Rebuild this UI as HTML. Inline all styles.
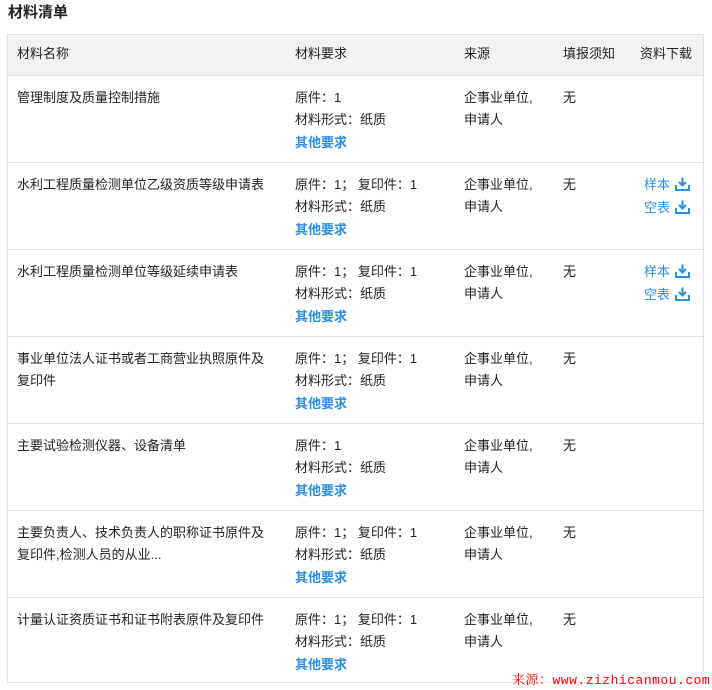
<!DOCTYPE html>
<html><head><meta charset="utf-8"><style>
*{margin:0;padding:0;box-sizing:border-box}
body{width:712px;height:690px;background:#fff;position:relative;overflow:hidden;font-family:"Liberation Sans","Noto Sans CJK SC",sans-serif;font-size:13px;color:#222}
.t{position:absolute;white-space:nowrap;line-height:22px}
.title{position:absolute;left:8px;top:2px;font-size:15px;font-weight:bold;color:#222;line-height:22px}
.tbl{position:absolute;left:7px;top:34px;width:697px;height:649px;border:1px solid #e2e2e2}
.hdr{position:absolute;left:0;top:0;width:100%;height:41px;background:#f2f2f2;border-bottom:1px solid #e2e2e2}
.line{position:absolute;left:0;width:100%;height:1px;background:#e2e2e2}
.b{color:#2b8fe0;font-weight:bold}
.dl{position:absolute;color:#2b8fe0;line-height:22px;white-space:nowrap}
.dl svg{vertical-align:-2px;margin-left:5px}
.wm{position:absolute;left:512px;top:672px;color:#f00;font-family:"Liberation Mono","Noto Serif CJK SC",monospace;font-size:13px;letter-spacing:0.5px;line-height:18px;white-space:nowrap;background:rgba(255,255,255,0.6)}
</style></head><body>
<div class="title">材料清单</div>
<div class="tbl">
<div class="hdr"></div>
<div class="line" style="top:127px"></div>
<div class="line" style="top:214px"></div>
<div class="line" style="top:301px"></div>
<div class="line" style="top:388px"></div>
<div class="line" style="top:475px"></div>
<div class="line" style="top:562px"></div>
</div>
<div class="t" style="left:17px;top:43px">材料名称</div>
<div class="t" style="left:295px;top:43px">材料要求</div>
<div class="t" style="left:464px;top:43px">来源</div>
<div class="t" style="left:563px;top:43px">填报须知</div>
<div class="t" style="left:640px;top:43px">资料下载</div>

<div id="rows"></div>
<script>
var rows=[
["管理制度及质量控制措施","原件：1",0],
["水利工程质量检测单位乙级资质等级申请表","原件：1；&nbsp;复印件：1",1],
["水利工程质量检测单位等级延续申请表","原件：1；&nbsp;复印件：1",1],
["事业单位法人证书或者工商营业执照原件及<br>复印件","原件：1；&nbsp;复印件：1",0],
["主要试验检测仪器、设备清单","原件：1",0],
["主要负责人、技术负责人的职称证书原件及<br>复印件,检测人员的从业...","原件：1；&nbsp;复印件：1",0],
["计量认证资质证书和证书附表原件及复印件","原件：1；&nbsp;复印件：1",0]];
var ic='<svg width="15" height="14" viewBox="0 0 15 14"><path d="M7.5 0.5v8M4 5l3.5 3.5L11 5" fill="none" stroke="#2b8fe0" stroke-width="2"/><path d="M1 8v5h13V8" fill="none" stroke="#2b8fe0" stroke-width="2"/></svg>';
var h='';
for(var i=0;i<rows.length;i++){
var y=87+i*87;
h+='<div class="t" style="left:17px;top:'+y+'px">'+rows[i][0]+'</div>';
h+='<div class="t" style="left:295px;top:'+y+'px">'+rows[i][1]+'<br>材料形式：纸质<br><span class="b" style="line-height:24px">其他要求</span></div>';
h+='<div class="t" style="left:464px;top:'+y+'px">企事业单位,<br>申请人</div>';
h+='<div class="t" style="left:563px;top:'+y+'px">无</div>';
if(rows[i][2]){h+='<div class="dl" style="left:644px;top:'+y+'px">样本'+ic+'</div><div class="dl" style="left:644px;top:'+(y+23)+'px">空表'+ic+'</div>';}
}
document.getElementById('rows').innerHTML=h;
</script>
<div class="wm">来源：www.zizhicanmou.com</div>
</body></html>
